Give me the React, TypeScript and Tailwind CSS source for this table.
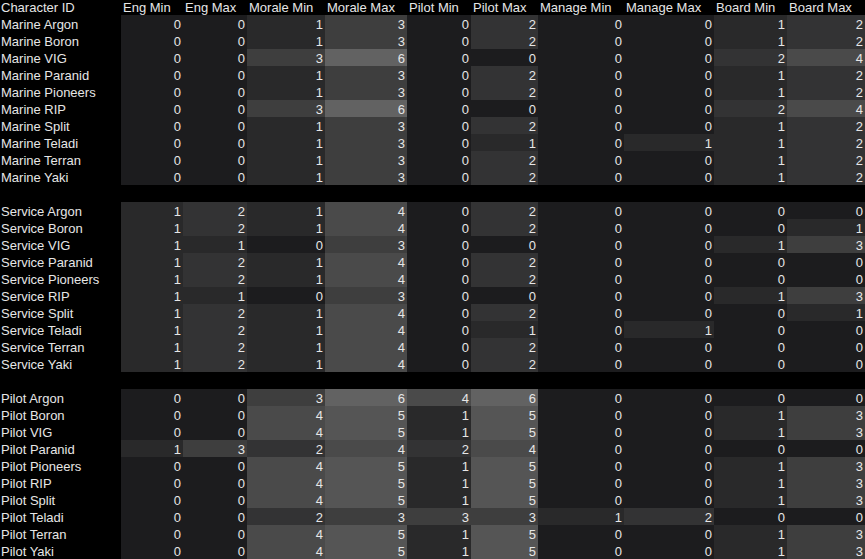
import React from "react";

const columns = [
  "Eng Min",
  "Eng Max",
  "Morale Min",
  "Morale Max",
  "Pilot Min",
  "Pilot Max",
  "Manage Min",
  "Manage Max",
  "Board Min",
  "Board Max",
];

// heat shades by value, 0..6
const shades = [
  "bg-[#1c1c1e]",
  "bg-[#29292a]",
  "bg-[#333334]",
  "bg-[#3e3e3e]",
  "bg-[#4a4a4a]",
  "bg-[#555555]",
  "bg-[#626262]",
];

type Row = [string, number[]];

const groups: Row[][] = [
  [
    ["Marine Argon", [0, 0, 1, 3, 0, 2, 0, 0, 1, 2]],
    ["Marine Boron", [0, 0, 1, 3, 0, 2, 0, 0, 1, 2]],
    ["Marine VIG", [0, 0, 3, 6, 0, 0, 0, 0, 2, 4]],
    ["Marine Paranid", [0, 0, 1, 3, 0, 2, 0, 0, 1, 2]],
    ["Marine Pioneers", [0, 0, 1, 3, 0, 2, 0, 0, 1, 2]],
    ["Marine RIP", [0, 0, 3, 6, 0, 0, 0, 0, 2, 4]],
    ["Marine Split", [0, 0, 1, 3, 0, 2, 0, 0, 1, 2]],
    ["Marine Teladi", [0, 0, 1, 3, 0, 1, 0, 1, 1, 2]],
    ["Marine Terran", [0, 0, 1, 3, 0, 2, 0, 0, 1, 2]],
    ["Marine Yaki", [0, 0, 1, 3, 0, 2, 0, 0, 1, 2]],
  ],
  [
    ["Service Argon", [1, 2, 1, 4, 0, 2, 0, 0, 0, 0]],
    ["Service Boron", [1, 2, 1, 4, 0, 2, 0, 0, 0, 1]],
    ["Service VIG", [1, 1, 0, 3, 0, 0, 0, 0, 1, 3]],
    ["Service Paranid", [1, 2, 1, 4, 0, 2, 0, 0, 0, 0]],
    ["Service Pioneers", [1, 2, 1, 4, 0, 2, 0, 0, 0, 0]],
    ["Service RIP", [1, 1, 0, 3, 0, 0, 0, 0, 1, 3]],
    ["Service Split", [1, 2, 1, 4, 0, 2, 0, 0, 0, 1]],
    ["Service Teladi", [1, 2, 1, 4, 0, 1, 0, 1, 0, 0]],
    ["Service Terran", [1, 2, 1, 4, 0, 2, 0, 0, 0, 0]],
    ["Service Yaki", [1, 2, 1, 4, 0, 2, 0, 0, 0, 0]],
  ],
  [
    ["Pilot Argon", [0, 0, 3, 6, 4, 6, 0, 0, 0, 0]],
    ["Pilot Boron", [0, 0, 4, 5, 1, 5, 0, 0, 1, 3]],
    ["Pilot VIG", [0, 0, 4, 5, 1, 5, 0, 0, 1, 3]],
    ["Pilot Paranid", [1, 3, 2, 4, 2, 4, 0, 0, 0, 0]],
    ["Pilot Pioneers", [0, 0, 4, 5, 1, 5, 0, 0, 1, 3]],
    ["Pilot RIP", [0, 0, 4, 5, 1, 5, 0, 0, 1, 3]],
    ["Pilot Split", [0, 0, 4, 5, 1, 5, 0, 0, 1, 3]],
    ["Pilot Teladi", [0, 0, 2, 3, 3, 3, 1, 2, 0, 0]],
    ["Pilot Terran", [0, 0, 4, 5, 1, 5, 0, 0, 1, 3]],
    ["Pilot Yaki", [0, 0, 4, 5, 1, 5, 0, 0, 1, 3]],
  ],
];

const grid =
  "grid grid-cols-[121px_62px_64px_78px_82px_64px_67px_86px_90px_73px_78px]";

export default function App() {
  return (
    <div className="h-[559px] w-[865px] overflow-hidden bg-black font-['Liberation_Sans',Arial,sans-serif] text-[13px] text-[#e6e6e6]">
      <div className={`${grid} h-[15px] leading-[15px]`}>
        <div className="pl-[1px]">Character ID</div>
        {columns.map((c) => (
          <div key={c} className="whitespace-nowrap pl-[2px]">
            {c}
          </div>
        ))}
      </div>

      {groups.map((rows, gi) => (
        <div key={gi}>
          {gi > 0 ? <div className="h-[17px]" /> : null}
          {rows.map(([name, values]) => (
            <div key={name} className={`${grid} h-[17px] overflow-hidden leading-[17px]`}>
              <div className="whitespace-nowrap pl-[1px] pt-[1px]">{name}</div>
              {values.map((v, i) => (
                <div key={i} className={`${shades[v]} pr-[2px] pt-[1px] text-right`}>
                  {v}
                </div>
              ))}
            </div>
          ))}
        </div>
      ))}
    </div>
  );
}
